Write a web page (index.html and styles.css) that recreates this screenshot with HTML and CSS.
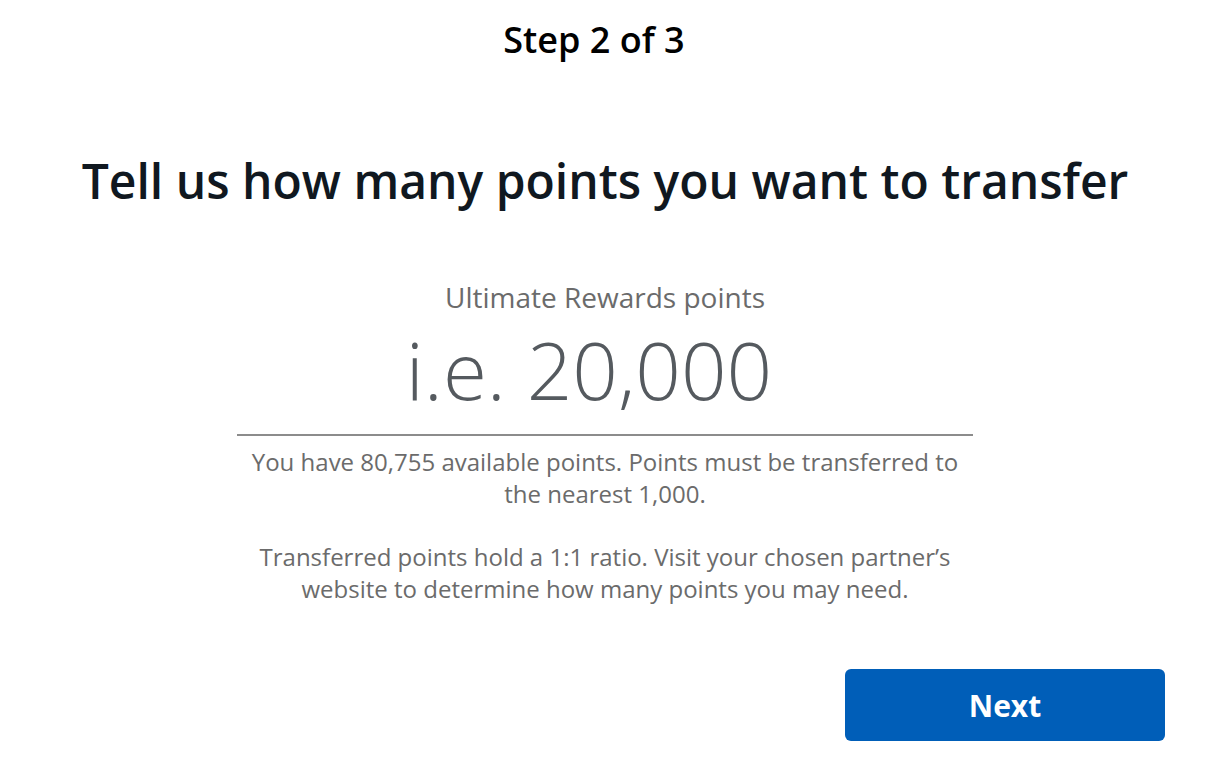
FILE: index.html
```html
<!DOCTYPE html>
<html lang="en">
<head>
    <meta charset="UTF-8">
    <title>Transfer points</title>
    <link rel="stylesheet" href="styles.css">
</head>
<body>

<!-- Transfer step -->
<main class="transfer">
    <div class="step-label">Step 2 of 3</div>

    <h1 class="title">Tell us how many points you want to transfer</h1>

    <div class="points-field">
        <label for="pointsInput">Ultimate Rewards points</label>
        <input type="text" id="pointsInput" placeholder="i.e. 20,000">
        <p>You have 80,755 available points. Points must be transferred to the nearest 1,000.</p>
        <p>Transferred points hold a 1:1 ratio. Visit your chosen partner’s website to determine how many points you may need.</p>
    </div>

    <div class="actions">
        <button class="next-btn">Next</button>
    </div>
</main>

</body>
</html>
```

FILE: styles.css
```css
* {
    margin: 0;
    padding: 0;
    box-sizing: border-box;
}
body {
    font-family: 'Open Sans', 'Liberation Sans', sans-serif;
    background-color: #fff;
    color: #101820;
}
.transfer {
    width: 1210px;
    display: flex;
    flex-direction: column;
    align-items: center;
}
.step-label {
    margin-top: 18px;
    margin-right: 22px;
    font-size: 36px;
    font-weight: 600;
    line-height: 44px;
    color: #000;
}
.title {
    margin-top: 86px;
    font-size: 48px;
    font-weight: 600;
    line-height: 66px;
    color: #101820;
}
.points-field {
    width: 736px;
    margin-top: 64px;
    display: flex;
    flex-direction: column;
    align-items: center;
    text-align: center;
}
.points-field label {
    font-size: 28px;
    line-height: 38px;
    color: #6b6b6b;
}
.points-field input {
    width: 100%;
    height: 120px;
    padding: 0 32px 14px 0;
    border: none;
    border-bottom: 2px solid #8c8c8c;
    font-family: inherit;
    font-size: 80px;
    font-weight: 300;
    text-align: center;
    color: #555a5f;
    outline: none;
    background: transparent;
}
.points-field input::placeholder {
    color: #555a5f;
}
.points-field p {
    margin-top: 10px;
    font-size: 24px;
    line-height: 32px;
    color: #6b6b6b;
}
.points-field p + p {
    margin-top: 31px;
}
.actions {
    width: 100%;
    display: flex;
    justify-content: flex-end;
    padding-right: 45px;
    margin-top: 64px;
}
.next-btn {
    width: 320px;
    height: 72px;
    background-color: #005eb8;
    color: #fff;
    border: none;
    border-radius: 6px;
    font-family: inherit;
    font-size: 30px;
    font-weight: 700;
    cursor: pointer;
}
```
